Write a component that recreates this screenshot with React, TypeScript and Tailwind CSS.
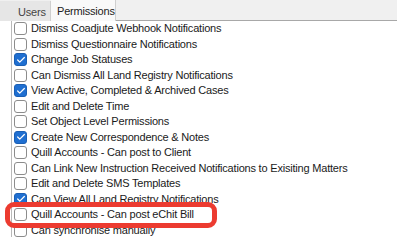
import { Check } from 'lucide-react'

interface Permission {
  label: string
  checked: boolean
}

const permissions: Permission[] = [
  { label: 'Dismiss Coadjute Webhook Notifications', checked: false },
  { label: 'Dismiss Questionnaire Notifications', checked: false },
  { label: 'Change Job Statuses', checked: true },
  { label: 'Can Dismiss All Land Registry Notifications', checked: false },
  { label: 'View Active, Completed & Archived Cases', checked: true },
  { label: 'Edit and Delete Time', checked: false },
  { label: 'Set Object Level Permissions', checked: false },
  { label: 'Create New Correspondence & Notes', checked: true },
  { label: 'Quill Accounts - Can post to Client', checked: false },
  { label: 'Can Link New Instruction Received Notifications to Exisiting Matters', checked: false },
  { label: 'Edit and Delete SMS Templates', checked: false },
  { label: 'Can View All Land Registry Notifications', checked: true },
  { label: 'Quill Accounts - Can post eChit Bill', checked: false },
  { label: 'Can synchronise manually', checked: false },
]

export default function App() {
  return (
    <div
      className="relative w-[397px] h-[237px] overflow-hidden bg-white text-[11px] tracking-[-0.2px] text-[#1a1a1a]"
      style={{ fontFamily: '"Liberation Sans", Arial, sans-serif' }}
    >
      <div className="flex h-[21px] bg-[#f0f0f0] border-b border-[#a8a8a8]">
        <div className="w-[51px] h-[20px] mt-[1px] pl-[18px] pt-[3px] bg-[#e6e6e6] border-r border-[#cfcfcf] text-[#444]">
          Users
        </div>
        <div className="w-[65px] h-[21px] pl-[6px] pt-[3px] bg-[#f9f9f9] border-r border-[#cfcfcf] text-[#222]">
          Permissions
        </div>
      </div>

      <div className="ml-[11px] border-l border-[#b9b9b9] h-full">
        {permissions.map((p) => (
          <Row key={p.label} permission={p} />
        ))}
      </div>

      <div className="absolute left-[5px] top-[202px] w-[212px] h-[26px] rounded-[9px] border-[5px] border-[#ec3b30]" />
    </div>
  )
}

function Row({ permission }: { permission: Permission }) {
  return (
    <div className="flex items-center h-[15.5px] pl-[2px] whitespace-nowrap">
      {permission.checked ? (
        <span className="w-[13px] h-[13px] rounded-[3px] bg-[#1f6fd1] border border-[#1a5fb4] flex items-center justify-center">
          <Check size={10} strokeWidth={3} color="#ffffff" />
        </span>
      ) : (
        <span className="w-[13px] h-[13px] rounded-[3px] bg-white border border-[#8c8c8c]" />
      )}
      <span className="ml-[4px] leading-none">{permission.label}</span>
    </div>
  )
}
